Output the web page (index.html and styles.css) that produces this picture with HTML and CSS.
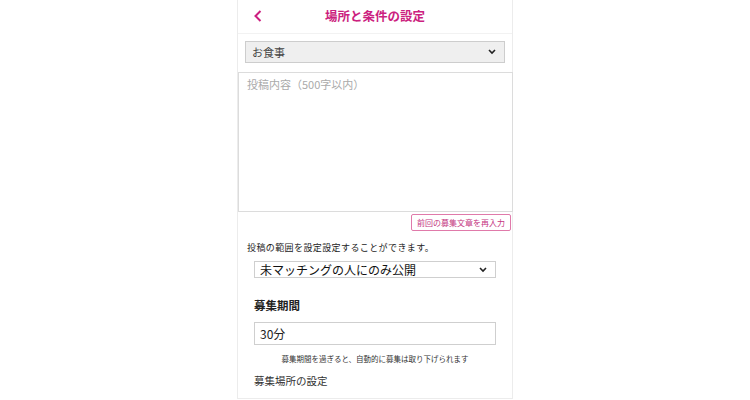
FILE: index.html
```html
<!DOCTYPE html>
<html>
<head>
    <meta charset="utf-8">
    <title>場所と条件の設定</title>
    <link rel="stylesheet" href="styles.css">
</head>
<body>

<div class="card">
    <div class="header">
        <span class="back">
            <svg width="8" height="12" viewBox="0 0 8 12"><polyline points="6.5,1 1.5,6 6.5,11" fill="none" stroke="#cc1f80" stroke-width="2"/></svg>
        </span>
        <h1 class="title">場所と条件の設定</h1>
        <span></span>
    </div>

    <div class="categoryRow">
        <div class="select graySelect">
            <span>お食事</span>
            <svg width="8" height="6" viewBox="0 0 8 6"><polyline points="1,1 4,4 7,1" fill="none" stroke="#222" stroke-width="1.6"/></svg>
        </div>
    </div>

    <div class="textarea">投稿内容（500字以内）</div>

    <div class="reuseRow">
        <span class="reuseBtn">前回の募集文章を再入力</span>
    </div>

    <p class="rangeNote">投稿の範囲を設定設定することができます。</p>

    <div class="block">
        <div class="select whiteSelect">
            <span>未マッチングの人にのみ公開</span>
            <svg width="8" height="6" viewBox="0 0 8 6"><polyline points="1,1 4,4 7,1" fill="none" stroke="#222" stroke-width="1.6"/></svg>
        </div>

        <h2 class="label">募集期間</h2>
        <div class="input">30分</div>
        <p class="hint">募集期間を過ぎると、自動的に募集は取り下げられます</p>

        <h2 class="subLabel">募集場所の設定</h2>
    </div>
</div>

</body>
</html>
```

FILE: styles.css
```css
body{
    margin: 0;
    background: #fff;
    font-family: "Noto Sans CJK JP", "Noto Sans", sans-serif;
    color: #222;
}
.card{
    width: 274px;
    height: 398px;
    margin: 0 auto;
    border: 1px solid #ececec;
    border-top: none;
}
.header{
    height: 31px;
    padding-bottom: 2px;
    display: grid;
    grid-template-columns: 40px 1fr 40px;
    align-items: center;
    border-bottom: 1px solid #f2f2f2;
}
.back{
    padding-left: 16px;
    display: flex;
}
.title{
    margin: 0;
    text-align: center;
    font-size: 12.5px;
    font-weight: bold;
    color: #cc1f80;
}
.categoryRow{
    padding: 7px 7px 0 7px;
}
.select{
    display: flex;
    justify-content: space-between;
    align-items: center;
    box-sizing: border-box;
}
.graySelect{
    height: 22px;
    padding: 0 8px 0 6px;
    background: #efefef;
    border: 1px solid #cdcdcd;
    font-size: 11px;
    color: #444;
}
.textarea{
    margin: 9px -1px 0 0;
    height: 140px;
    box-sizing: border-box;
    border: 1px solid #dcdcdc;
    padding: 3px 8px;
    font-size: 11px;
    color: #aaa;
}
.reuseRow{
    display: flex;
    justify-content: flex-end;
    padding: 2px 1px 0 0;
}
.reuseBtn{
    height: 17px;
    box-sizing: border-box;
    width: 100px;
    border: 1px solid #e07aaa;
    border-radius: 2px;
    font-size: 8px;
    color: #c4367f;
    display: flex;
    align-items: center;
    justify-content: center;
}
.rangeNote{
    margin: 10px 0 0 9px;
    font-size: 9px;
    letter-spacing: 0.4px;
    color: #222;
}
.block{
    padding: 0 16px;
}
.whiteSelect{
    margin-top: 7px;
    height: 17px;
    padding: 0 8px 0 5px;
    border: 1px solid #cfcfcf;
    font-size: 12px;
    color: #111;
}
.label{
    margin: 19px 0 0 0;
    font-size: 11.5px;
    font-weight: bold;
}
.input{
    margin-top: 9px;
    height: 23px;
    box-sizing: border-box;
    border: 1px solid #cfcfcf;
    padding: 0 5px;
    font-size: 12px;
    display: flex;
    align-items: center;
}
.hint{
    margin: 8px 0 0 0;
    text-align: center;
    font-size: 7.5px;
    color: #333;
}
.subLabel{
    margin: 9px 0 0 0;
    font-size: 10.5px;
    font-weight: normal;
    color: #333;
}
```
